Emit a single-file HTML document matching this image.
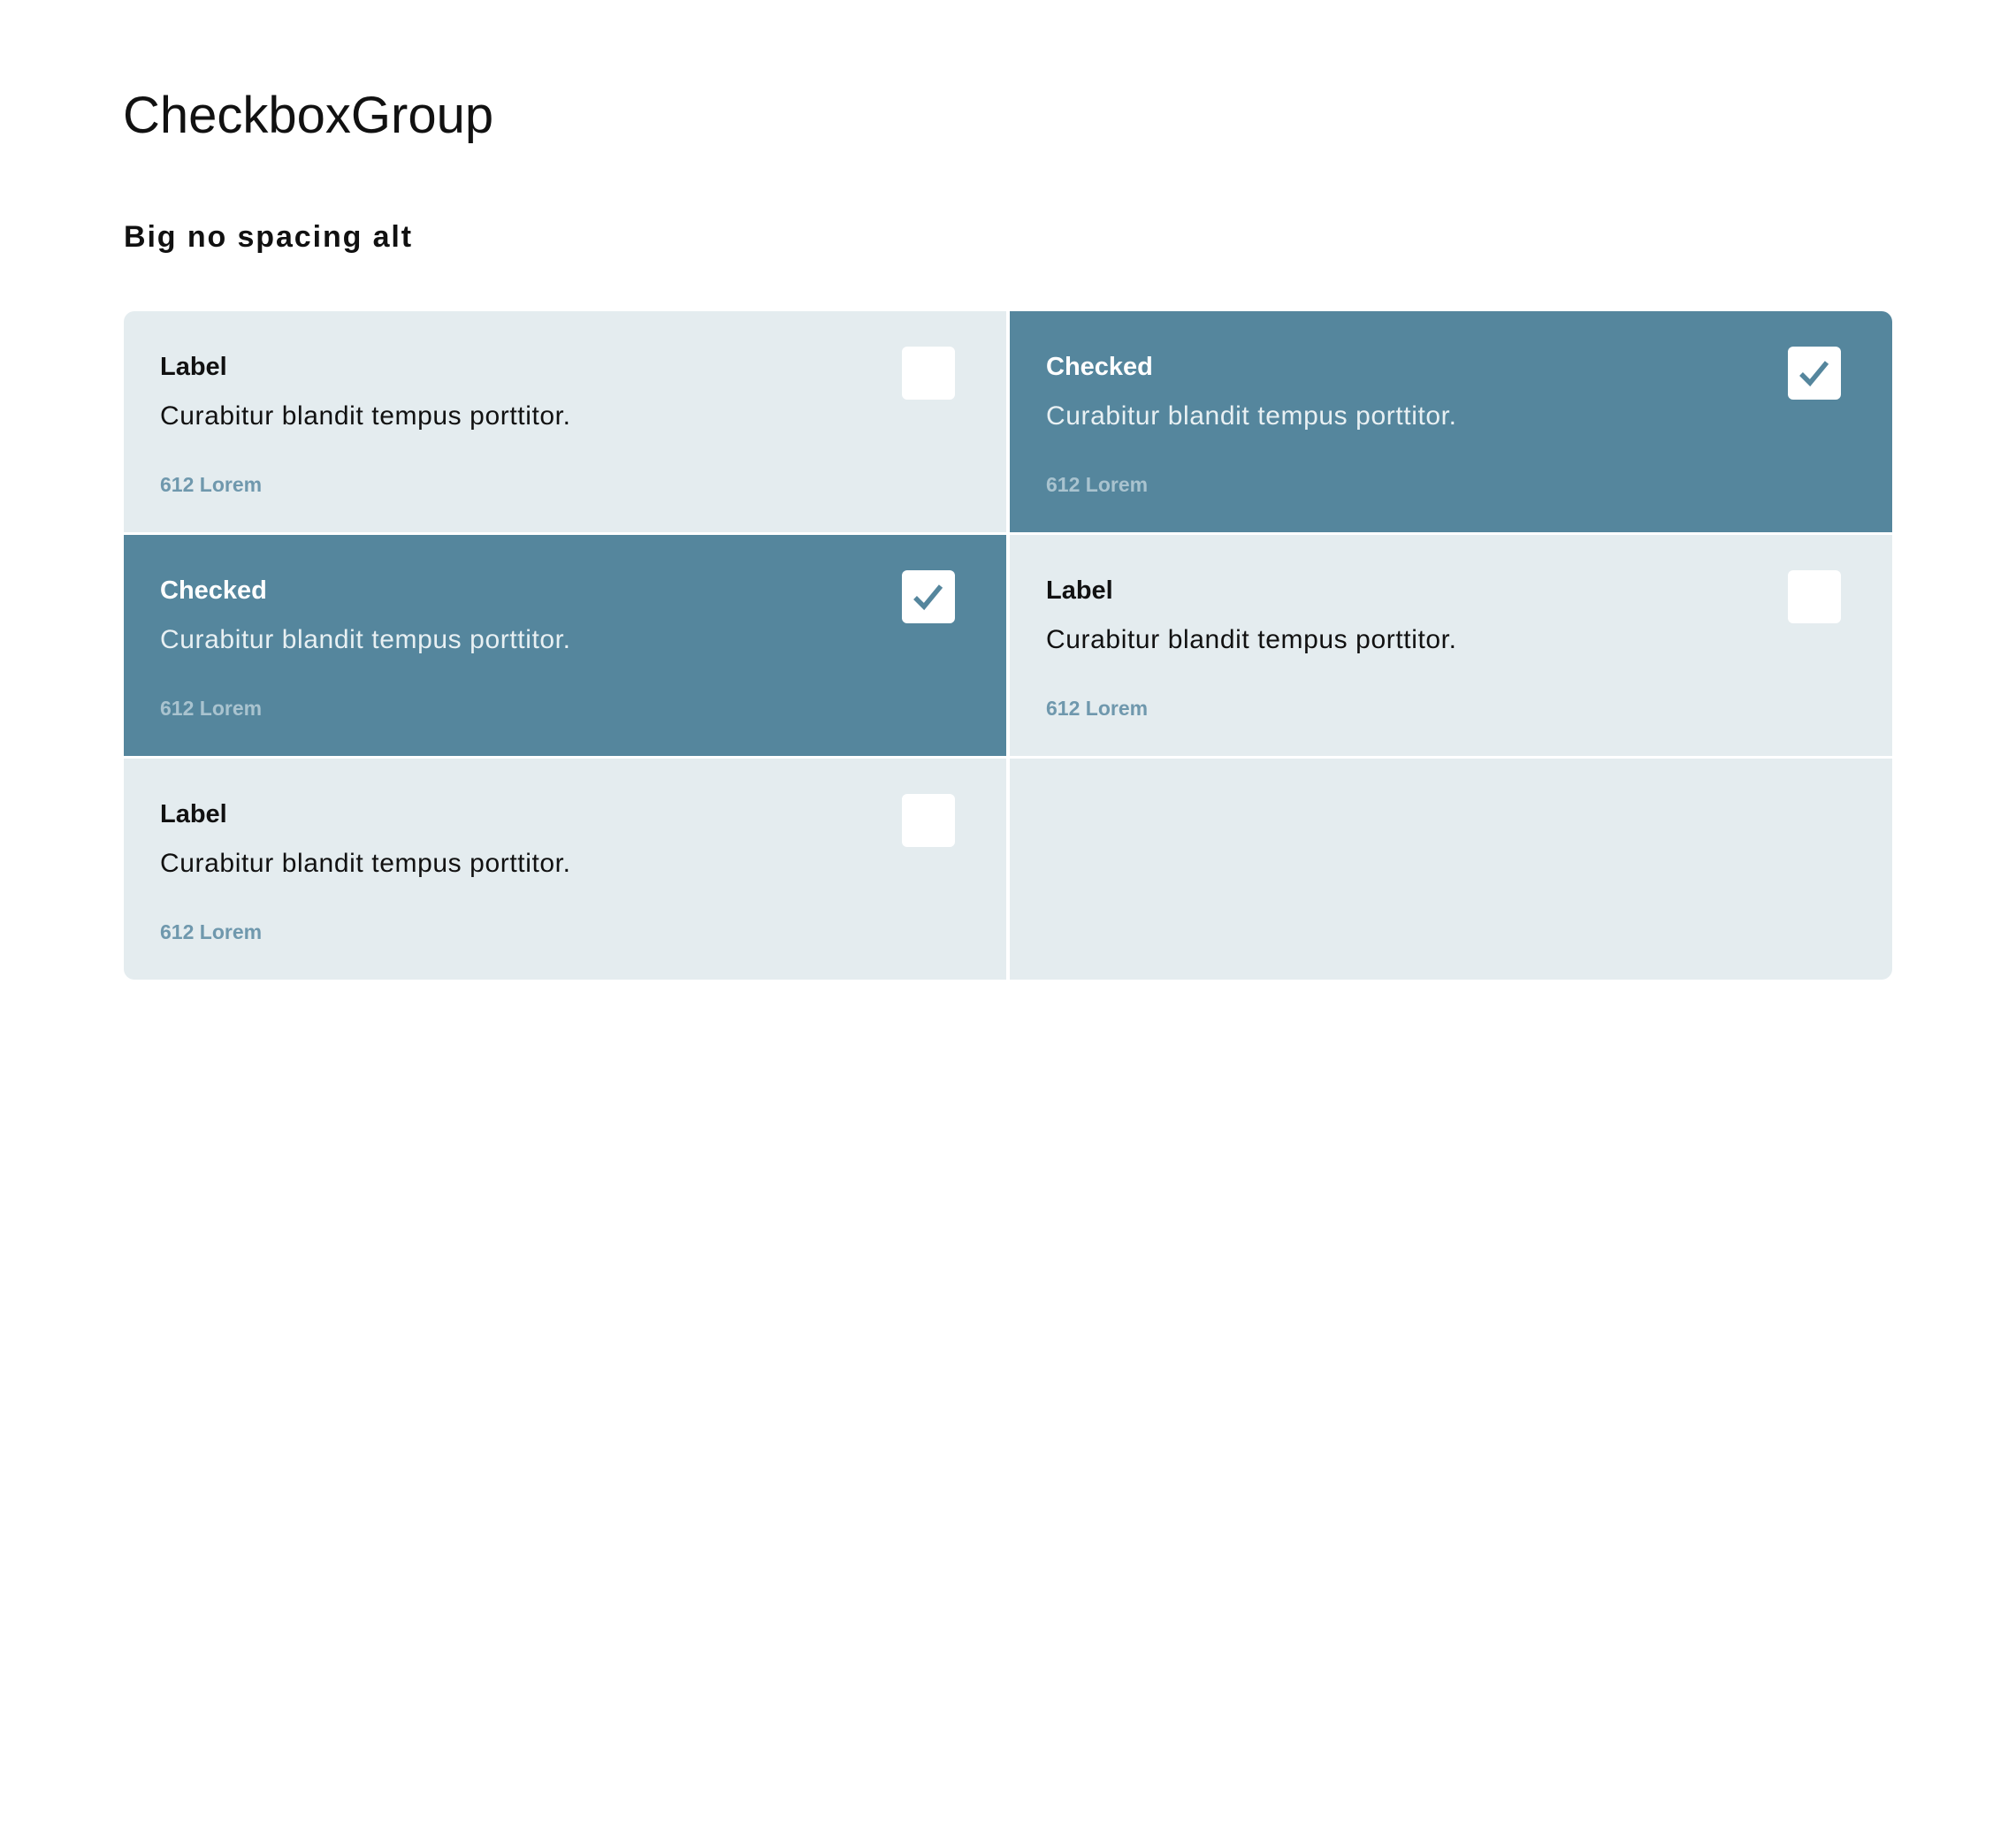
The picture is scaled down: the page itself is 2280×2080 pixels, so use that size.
<!DOCTYPE html>
<html><head><meta charset="utf-8"><style>
body{margin:0;background:#fff;width:2280px;height:2080px;font-family:"Liberation Sans",sans-serif;position:relative;}
h1{position:absolute;left:139px;top:96px;margin:0;font-size:58px;font-weight:300;color:#111;line-height:70px;}
h2{position:absolute;left:140px;top:248px;margin:0;font-size:34px;letter-spacing:1.9px;font-weight:bold;color:#111;line-height:40px;}
.grid{position:absolute;left:140px;top:352px;width:2000px;display:grid;grid-template-columns:998px 998px;grid-template-rows:250px 250px 250px;column-gap:4px;row-gap:3px;border-radius:12px;overflow:hidden;}
.c{background:#e4ecef;position:relative;}
.c.k{background:#55869d;}
.t{position:absolute;left:41px;top:47px;font-size:29px;font-weight:bold;color:#111;}
.d{position:absolute;left:41px;top:102px;font-size:30px;letter-spacing:0.6px;color:#111;}
.l{position:absolute;left:41px;top:183px;font-size:23px;font-weight:bold;color:#6f98ad;}
.k .t{color:#fff}.k .d{color:#e8f0f3}.k .l{color:#a9c3cf}
.b{position:absolute;left:880px;top:40px;width:60px;height:60px;background:#fff;border-radius:6px;}
</style></head><body>
<h1>CheckboxGroup</h1>
<h2>Big no spacing alt</h2>
<div class="grid">
<div class="c"><div class="t">Label</div><div class="d">Curabitur blandit tempus porttitor.</div><div class="l">612 Lorem</div><div class="b"></div></div>
<div class="c k"><div class="t">Checked</div><div class="d">Curabitur blandit tempus porttitor.</div><div class="l">612 Lorem</div><div class="b"><svg width="60" height="60"><path d="M15 31 L25 41 L44 18" fill="none" stroke="#55869d" stroke-width="5.5"/></svg></div></div>
<div class="c k"><div class="t">Checked</div><div class="d">Curabitur blandit tempus porttitor.</div><div class="l">612 Lorem</div><div class="b"><svg width="60" height="60"><path d="M15 31 L25 41 L44 18" fill="none" stroke="#55869d" stroke-width="5.5"/></svg></div></div>
<div class="c"><div class="t">Label</div><div class="d">Curabitur blandit tempus porttitor.</div><div class="l">612 Lorem</div><div class="b"></div></div>
<div class="c"><div class="t">Label</div><div class="d">Curabitur blandit tempus porttitor.</div><div class="l">612 Lorem</div><div class="b"></div></div>
<div class="c"></div>
</div>
</body></html>
